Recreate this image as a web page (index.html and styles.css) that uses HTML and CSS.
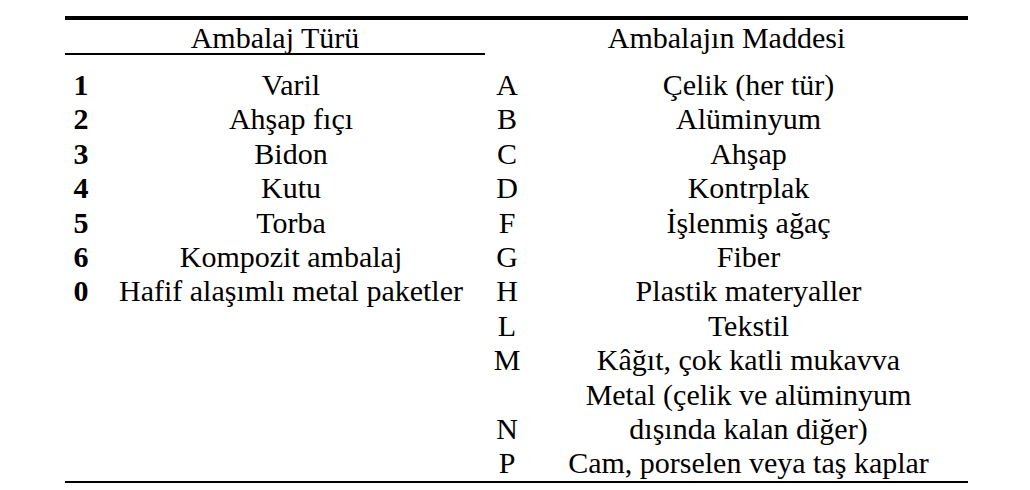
FILE: index.html
```html
<!DOCTYPE html>
<html lang="tr">
<head>
<meta charset="utf-8">
<title>Ambalaj</title>
<link rel="stylesheet" href="styles.css">
</head>
<body>
<div class="caption"><span>1.2. Ambalaj tipi kodlaması: ambalaj türü, ambalajın maddesi ve kategorisi yer alır: tipi</span></div>
<div class="table">
  <div class="head head-left">Ambalaj Türü</div>
  <div class="head head-right">Ambalajın Maddesi</div>
  <div class="spacer"></div>

  <div class="num">1</div><div class="type">Varil</div><div class="code">A</div><div class="mat">Çelik (her tür)</div>
  <div class="num">2</div><div class="type">Ahşap fıçı</div><div class="code">B</div><div class="mat">Alüminyum</div>
  <div class="num">3</div><div class="type">Bidon</div><div class="code">C</div><div class="mat">Ahşap</div>
  <div class="num">4</div><div class="type">Kutu</div><div class="code">D</div><div class="mat">Kontrplak</div>
  <div class="num">5</div><div class="type">Torba</div><div class="code">F</div><div class="mat">İşlenmiş ağaç</div>
  <div class="num">6</div><div class="type">Kompozit ambalaj</div><div class="code">G</div><div class="mat">Fiber</div>
  <div class="num">0</div><div class="type">Hafif alaşımlı metal paketler</div><div class="code">H</div><div class="mat">Plastik materyaller</div>
  <div class="num"></div><div class="type"></div><div class="code">L</div><div class="mat">Tekstil</div>
  <div class="num"></div><div class="type"></div><div class="code">M</div><div class="mat">Kâğıt, çok katli mukavva</div>
  <div class="num"></div><div class="type"></div><div class="code code-bottom">N</div><div class="mat">Metal (çelik ve alüminyum<br>dışında kalan diğer)</div>
  <div class="num"></div><div class="type"></div><div class="code">P</div><div class="mat">Cam, porselen veya taş kaplar</div>
</div>
</body>
</html>
```
FILE: styles.css
```css
html, body {
  margin: 0;
  padding: 0;
  background: #ffffff;
}
body {
  width: 1030px;
  height: 490px;
  overflow: hidden;
  font-family: "Liberation Serif", "Times New Roman", serif;
  color: #000000;
}
.caption {
  height: 4px;
  overflow: hidden;
  padding-left: 26px;
  white-space: nowrap;
}
.caption span {
  display: block;
  font-weight: bold;
  font-size: 30px;
  line-height: 34px;
  margin-top: -34px;
}
.table {
  margin: 12px 0 0 65px;
  width: 903px;
  display: grid;
  grid-template-columns: 32px 388px 44px 439px;
  border-top: 4px solid #000;
  border-bottom: 2px solid #000;
  font-size: 30px;
  line-height: 34.4px;
  text-align: center;
}
.head {
  grid-column: span 2;
  height: 30px;
  padding-top: 3px;
  line-height: 30px;
}
.head-left {
  border-bottom: 2px solid #000;
}
.head-right {
  height: 32px;
}
.spacer {
  grid-column: 1 / -1;
  height: 13px;
}
.num {
  font-weight: bold;
}
.code-bottom {
  align-self: end;
}
```
